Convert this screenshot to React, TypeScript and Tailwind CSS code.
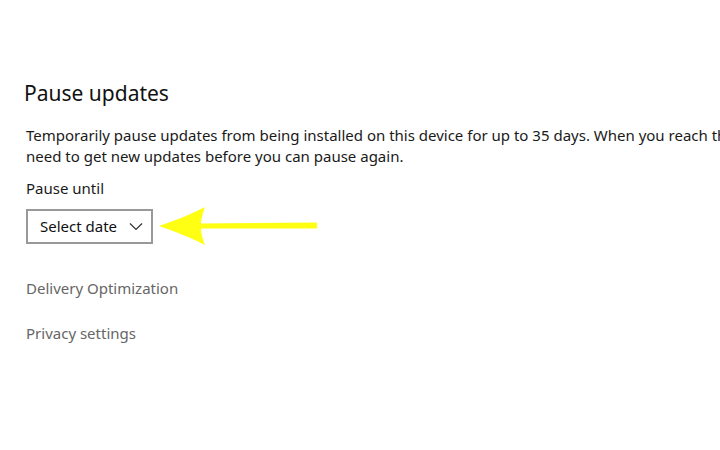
export default function App() {
  return (
    <main className="w-[720px] h-[450px] overflow-hidden bg-white text-[#000] font-['Noto_Sans',sans-serif]">
      <div className="pl-[24px] pt-[78px] whitespace-nowrap">
        {/* heading */}
        <h1 className="text-[21px] leading-[30px] font-normal text-[#111]">Pause updates</h1>

        <p className="mt-[17px] pl-[2px] text-[15px] leading-[21px] text-[#1a1a1a]">
          Temporarily pause updates from being installed on this device for up to 35 days. When you reach the limit, you'll
          <br />
          need to get new updates before you can pause again.
        </p>

        <div className="mt-[11px] pl-[2px] text-[15px] leading-[21px] text-[#1a1a1a]">Pause until</div>

        <div className="mt-[7px] pl-[2px] flex items-center">
          <button className="w-[127px] h-[35px] border-2 border-[#999] flex items-center pl-[12px] text-[15px] text-[#111]">
            <span>Select date</span>
            <svg className="ml-[12px] w-[14px] h-[10px]" viewBox="0 0 14 10" fill="none" stroke="#333" strokeWidth="1.2">
              <path d="M1 2.5 L7 8.5 L13 2.5" />
            </svg>
          </button>
          {/* annotation arrow */}
          <svg className="ml-[5px] w-[160px] h-[40px]" viewBox="0 0 160 40" fill="#ffff14">
            <path d="M1 20 C18 14 34 8 47 1 C44 10 43 15 43 17.5 L159 16.5 L159 22.5 L43 22.5 C43 26 44 31 47 39 C34 32 18 26 1 20 Z" />
          </svg>
        </div>

        <div className="mt-[32px] pl-[2px] text-[15px] leading-[21px] text-[#666]">Delivery Optimization</div>
        <div className="mt-[24px] pl-[2px] text-[15px] leading-[21px] text-[#666]">Privacy settings</div>
      </div>
    </main>
  );
}
